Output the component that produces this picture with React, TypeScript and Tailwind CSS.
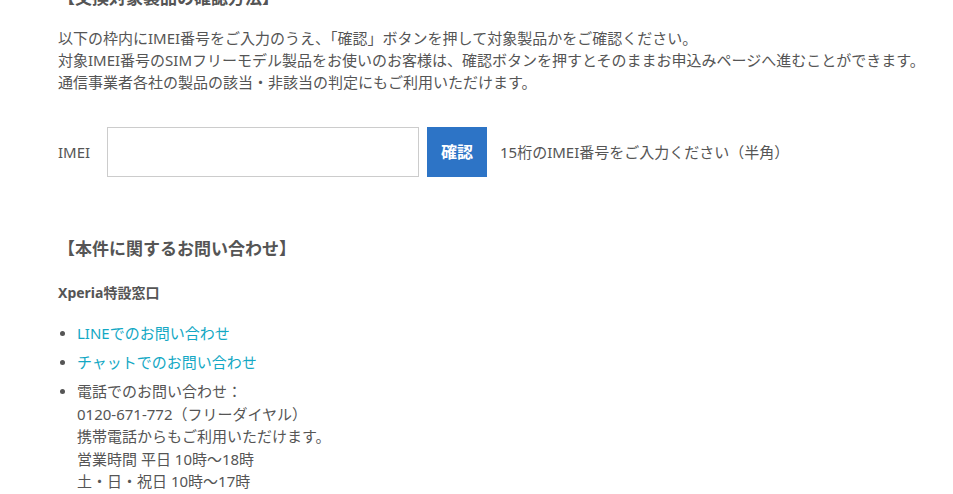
import React from 'react';

const contactItems = [
  { label: 'LINEでのお問い合わせ', href: '#line' },
  { label: 'チャットでのお問い合わせ', href: '#chat' },
];

export default function App() {
  return (
    <div className="h-[494px] w-[953px] overflow-hidden bg-white pl-[58px] pr-4 font-['Noto_Sans','Noto_Sans_CJK_JP',sans-serif] text-[#555]">
      <h3 className="-mt-[14px] text-[17px] font-bold leading-[24px]">【交換対象製品の確認方法】</h3>

      <p className="mt-[17px] text-[15px] leading-[22px]">
        以下の枠内にIMEI番号をご入力のうえ、「確認」ボタンを押して対象製品かをご確認ください。
        <br />
        対象IMEI番号のSIMフリーモデル製品をお使いのお客様は、確認ボタンを押すとそのままお申込みページへ進むことができます。
        <br />
        通信事業者各社の製品の該当・非該当の判定にもご利用いただけます。
      </p>

      <div className="mt-[34px] flex items-center text-[15px]">
        <label htmlFor="imei" className="w-[49px]">IMEI</label>
        <input id="imei" type="text" className="h-[50px] w-[312px] border border-[#ccc] bg-white px-2 outline-none" />
        <button className="ml-[8px] h-[50px] w-[60px] bg-[#2d74c6] text-[16px] font-bold text-white">確認</button>
        <span className="ml-[13px]">15桁のIMEI番号をご入力ください（半角）</span>
      </div>

      <h3 className="mt-[60px] text-[17px] font-bold leading-[24px]">【本件に関するお問い合わせ】</h3>

      <h4 className="mt-[21px] text-[14px] font-bold leading-[22px]">Xperia特設窓口</h4>

      <ul className="mt-[18px] flex flex-col gap-[6.5px] text-[15px] leading-[22.5px]">
        {contactItems.map((item) => (
          <li key={item.label} className="flex">
            <span className="w-[19px] shrink-0 pt-[9px] pl-[2px]">
              <span className="block h-[5px] w-[5px] rounded-full bg-[#555]" />
            </span>
            <a href={item.href} className="text-[#13a8c4]">{item.label}</a>
          </li>
        ))}
        <li className="flex">
          <span className="w-[19px] shrink-0 pt-[9px] pl-[2px]">
            <span className="block h-[5px] w-[5px] rounded-full bg-[#555]" />
          </span>
          <div>
            電話でのお問い合わせ：
            <br />
            0120-671-772（フリーダイヤル）
            <br />
            携帯電話からもご利用いただけます。
            <br />
            営業時間 平日 10時～18時
            <br />
            土・日・祝日 10時～17時
          </div>
        </li>
      </ul>
    </div>
  );
}
